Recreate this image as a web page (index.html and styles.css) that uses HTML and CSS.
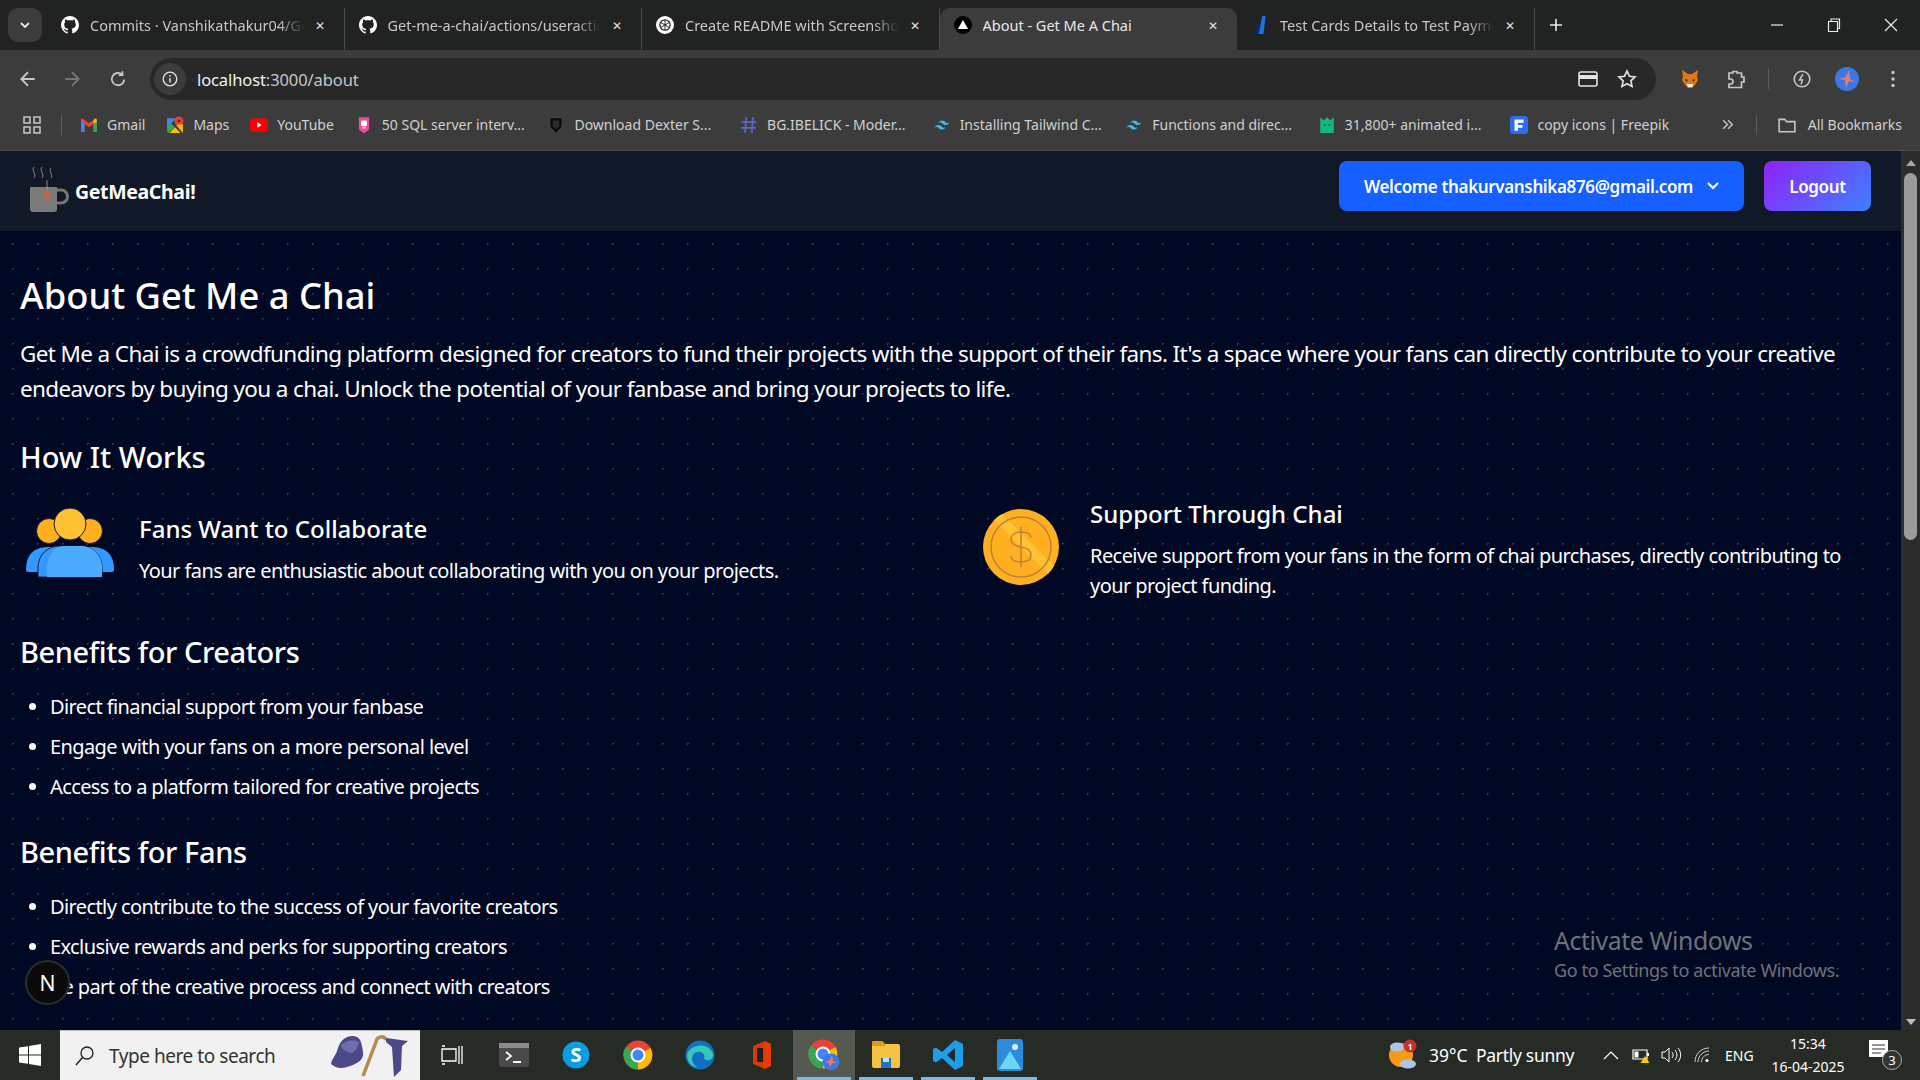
FILE: index.html
```html
<!DOCTYPE html>
<html lang="en">
<head>
    <meta charset="UTF-8">
    <title>About - Get Me A Chai</title>
    <link rel="stylesheet" href="styles.css">
</head>
<body>
    <div class="tabstrip">
        <div class="tab-search"><svg width="10" height="6" viewBox="0 0 10 6"><path d="M1 1l4 4 4-4" fill="none" stroke="#e8eaed" stroke-width="1.8"/></svg></div>
        <div class="tab">
            <svg class="fav" viewBox="0 0 16 16"><path fill="#fff" d="M8 0C3.6 0 0 3.6 0 8c0 3.5 2.3 6.5 5.5 7.6.4.1.5-.2.5-.4v-1.4c-2.2.5-2.7-1.1-2.7-1.1-.4-.9-.9-1.2-.9-1.2-.7-.5.1-.5.1-.5.8.1 1.2.8 1.2.8.7 1.2 1.9.9 2.3.7.1-.5.3-.9.5-1.1-1.8-.2-3.6-.9-3.6-4 0-.9.3-1.6.8-2.1-.1-.2-.4-1 .1-2.1 0 0 .7-.2 2.2.8.6-.2 1.3-.3 2-.3s1.4.1 2 .3c1.5-1 2.2-.8 2.2-.8.4 1.1.2 1.9.1 2.1.5.6.8 1.3.8 2.1 0 3.1-1.9 3.7-3.7 3.9.3.3.6.8.6 1.5v2.2c0 .2.1.5.6.4C13.7 14.5 16 11.5 16 8c0-4.4-3.6-8-8-8z"/></svg>
            <span class="tab-title">Commits · Vanshikathakur04/Ge</span>
            <span class="tab-x">✕</span>
        </div>
        <div class="tab">
            <svg class="fav" viewBox="0 0 16 16"><path fill="#fff" d="M8 0C3.6 0 0 3.6 0 8c0 3.5 2.3 6.5 5.5 7.6.4.1.5-.2.5-.4v-1.4c-2.2.5-2.7-1.1-2.7-1.1-.4-.9-.9-1.2-.9-1.2-.7-.5.1-.5.1-.5.8.1 1.2.8 1.2.8.7 1.2 1.9.9 2.3.7.1-.5.3-.9.5-1.1-1.8-.2-3.6-.9-3.6-4 0-.9.3-1.6.8-2.1-.1-.2-.4-1 .1-2.1 0 0 .7-.2 2.2.8.6-.2 1.3-.3 2-.3s1.4.1 2 .3c1.5-1 2.2-.8 2.2-.8.4 1.1.2 1.9.1 2.1.5.6.8 1.3.8 2.1 0 3.1-1.9 3.7-3.7 3.9.3.3.6.8.6 1.5v2.2c0 .2.1.5.6.4C13.7 14.5 16 11.5 16 8c0-4.4-3.6-8-8-8z"/></svg>
            <span class="tab-title">Get-me-a-chai/actions/useractio</span>
            <span class="tab-x">✕</span>
        </div>
        <div class="tab">
            <svg class="fav" viewBox="0 0 16 16"><circle cx="8" cy="8" r="8" fill="#fff"/><circle cx="8" cy="8" r="4.6" fill="none" stroke="#333" stroke-width="1.2"/><path d="M8 3.4v9.2M4 5.7l8 4.6M12 5.7l-8 4.6" stroke="#333" stroke-width=".9"/></svg>
            <span class="tab-title">Create README with Screensho</span>
            <span class="tab-x">✕</span>
        </div>
        <div class="tab tab-active">
            <svg class="fav" viewBox="0 0 16 16"><circle cx="8" cy="8" r="8" fill="#000"/><path d="M8 3.5l4.5 8h-9z" fill="#fff"/></svg>
            <span class="tab-title">About - Get Me A Chai</span>
            <span class="tab-x">✕</span>
        </div>
        <div class="tab tab-last">
            <svg class="fav" viewBox="0 0 16 16"><path d="M1 16C5 12 8 6 10 1l-2 15z" fill="#0a2a66"/><path d="M10 0h3l-2 16H7z" fill="#1a73e8"/></svg>
            <span class="tab-title">Test Cards Details to Test Payme</span>
            <span class="tab-x">✕</span>
        </div>
        <div class="tab-new"><svg width="14" height="14" viewBox="0 0 14 14"><path d="M7 1v12M1 7h12" stroke="#e8eaed" stroke-width="1.6"/></svg></div>
        <div class="win-buttons">
            <svg width="14" height="14" viewBox="0 0 14 14"><path d="M1 7h12" stroke="#e8eaed" stroke-width="1.2"/></svg>
            <svg width="14" height="14" viewBox="0 0 14 14"><path d="M1.5 3.5h9v10h-9zM4 3.5V1h8.5v9.5h-2" fill="none" stroke="#e8eaed" stroke-width="1.2"/></svg>
            <svg width="14" height="14" viewBox="0 0 14 14"><path d="M1 1l12 12M13 1L1 13" stroke="#e8eaed" stroke-width="1.2"/></svg>
        </div>
    </div>

    <div class="toolbar">
        <svg class="nav-ic" viewBox="0 0 16 16"><path d="M14 8H2.5M8 2L2 8l6 6" fill="none" stroke="#c7c7c7" stroke-width="1.6"/></svg>
        <svg class="nav-ic" viewBox="0 0 16 16"><path d="M2 8h11.5M8 2l6 6-6 6" fill="none" stroke="#747775" stroke-width="1.6"/></svg>
        <svg class="nav-ic" viewBox="0 0 16 16"><path d="M13.5 8.5A5.5 5.5 0 1 1 11.5 3.8M12 1v3.5H8.5" fill="none" stroke="#c7c7c7" stroke-width="1.6"/></svg>
        <div class="omnibox">
            <div class="site-info"><svg width="16" height="16" viewBox="0 0 16 16"><circle cx="8" cy="8" r="6.8" fill="none" stroke="#e3e3e3" stroke-width="1.3"/><path d="M8 7v4.5M8 4.3v1.4" stroke="#e3e3e3" stroke-width="1.4"/></svg></div>
            <span class="url"><span class="url-host">localhost</span>:3000/about</span>
            <span class="spacer"></span>
            <svg class="omni-card" width="20" height="16" viewBox="0 0 20 16"><rect x="1" y="1" width="18" height="14" rx="2" fill="none" stroke="#e3e3e3" stroke-width="1.6"/><rect x="1" y="4" width="18" height="4" fill="#e3e3e3"/></svg>
            <svg width="20" height="20" viewBox="0 0 18 18"><path d="M9 1.8l2.2 4.7 5 .6-3.7 3.5 1 5.1L9 13.2l-4.500 2.500 1-5.100L1.800 7.100l5-.6z" fill="none" stroke="#e3e3e3" stroke-width="1.500"/></svg>
        </div>
        <svg class="ext-ic ext-fox" viewBox="0 0 20 20"><path d="M2 1l6 4h4l6-4-1 7 1 3-3 5-3 3H8l-3-3-3-5 1-3z" fill="#e2761b"/><path d="M7 15h6l-1 3H8z" fill="#f5f5f5"/><path d="M5 10l3 1-2 2zM15 10l-3 1 2 2z" fill="#3a2a1a"/></svg>
        <svg class="ext-ic ext-puzzle" viewBox="0 0 20 20"><path d="M7 4V2.500h4V4h4.500v4H18v5h-2.500v5.500H3V15h1.500a2 2 0 0 0 0-5H3V4z" fill="none" stroke="#c7c7c7" stroke-width="1.700"/></svg>
        <span class="tool-sep"></span>
        <svg class="ext-ic ext-bolt" viewBox="0 0 20 20"><circle cx="10" cy="10" r="7.800" fill="none" stroke="#c7c7c7" stroke-width="1.600"/><path d="M11 5l-3.500 6h3L9 15.500" fill="none" stroke="#c7c7c7" stroke-width="1.500"/></svg>
        <svg class="avatar" viewBox="0 0 24 24"><circle cx="12" cy="12" r="12" fill="#3b78e7"/><path d="M14 3l1 9 6 3-7-1-3 7-1-8-6-1 7-2z" fill="#f2786d"/></svg>
        <svg class="dots" viewBox="0 0 4 18"><circle cx="2" cy="2.500" r="1.700" fill="#c7c7c7"/><circle cx="2" cy="9" r="1.700" fill="#c7c7c7"/><circle cx="2" cy="15.500" r="1.700" fill="#c7c7c7"/></svg>
    </div>

    <div class="bookmarks">
        <svg class="apps" viewBox="0 0 18 18"><path d="M1 1h6v6H1zM11 1h6v6h-6zM1 11h6v6H1zM11 11h6v6h-6z" fill="none" stroke="#c7c7c7" stroke-width="1.500"/></svg>
        <span class="bm-sep"></span>
        <div class="bm"><svg class="bm-ic" viewBox="0 0 16 16"><path d="M1 3v11h3V7l4 3 4-3v7h3V3l-1-1-6 4.500L2 2z" fill="#ea4335"/><path d="M1 3v11h3V7z" fill="#4285f4"/><path d="M12 7v7h3V3z" fill="#34a853"/><path d="M13 2.300L15 3v2l-3 2V4z" fill="#fbbc04"/></svg>Gmail</div>
        <div class="bm"><svg class="bm-ic" viewBox="0 0 16 16"><path d="M1 3l7 7-6 5-1-1z" fill="#34a853"/><path d="M1 2h8l-8 8z" fill="#4285f4"/><path d="M3 15l5-5 5 5z" fill="#fbbc04"/><circle cx="11.500" cy="4.500" r="4" fill="#ea4335"/><circle cx="11.500" cy="4.500" r="1.300" fill="#7a1a14"/><path d="M9 8l6 7V7z" fill="#fbbc04"/></svg>Maps</div>
        <div class="bm"><svg class="bm-ic" viewBox="0 0 16 16"><rect y="2" width="16" height="12" rx="3.500" fill="#f00"/><path d="M6.500 5.500v5l4-2.500z" fill="#fff"/></svg>YouTube</div>
        <div class="bm bm-wide"><svg class="bm-ic" viewBox="0 0 16 16"><path d="M3.500 1h9v11L8 15.500 3.500 12z" fill="#e84f9b"/><rect x="5.500" y="4" width="5" height="5" rx="1" fill="#fff"/><path d="M6.500 10.500h3" stroke="#fff"/></svg>50 SQL server interv...</div>
        <div class="bm bm-wide"><svg class="bm-ic" viewBox="0 0 16 16"><path d="M2.500 1.500h11v8L8 15.500l-5.500-6z" fill="#0b0b0b" stroke="#555" stroke-width=".7"/><path d="M5 4h6v5l-3 3-3-3z" fill="#2a2a2a"/></svg>Download Dexter S...</div>
        <div class="bm bm-wide"><svg class="bm-ic" viewBox="0 0 16 16"><path d="M5.500 1l-1 14M11.500 1l-1 14M1.500 5.500h13M1 10.500h13" stroke="#5b6ac4" stroke-width="1.500"/></svg>BG.IBELICK - Moder...</div>
        <div class="bm bm-wide"><svg class="bm-ic" viewBox="0 0 24 24"><path fill="#38bdf8" d="M12 6c-2.670 0-4.330 1.330-5 4 1-1.330 2.170-1.830 3.500-1.500.76.19 1.310.74 1.910 1.350C13.390 10.850 14.500 12 17 12c2.670 0 4.330-1.330 5-4-1 1.330-2.170 1.830-3.500 1.500-.76-.19-1.300-.74-1.910-1.350C15.610 7.150 14.500 6 12 6zM7 12c-2.670 0-4.330 1.330-5 4 1-1.330 2.170-1.830 3.500-1.500.76.19 1.300.74 1.910 1.350C8.390 16.850 9.500 18 12 18c2.670 0 4.330-1.330 5-4-1 1.330-2.170 1.830-3.500 1.500-.76-.19-1.300-.74-1.910-1.350C10.610 13.150 9.500 12 7 12z"/></svg>Installing Tailwind C...</div>
        <div class="bm bm-wide"><svg class="bm-ic" viewBox="0 0 24 24"><path fill="#38bdf8" d="M12 6c-2.670 0-4.330 1.330-5 4 1-1.330 2.170-1.830 3.500-1.500.76.19 1.310.74 1.910 1.350C13.390 10.850 14.500 12 17 12c2.670 0 4.330-1.330 5-4-1 1.330-2.170 1.830-3.500 1.500-.76-.19-1.300-.74-1.910-1.350C15.610 7.150 14.500 6 12 6zM7 12c-2.670 0-4.330 1.330-5 4 1-1.330 2.170-1.830 3.500-1.500.76.19 1.300.74 1.910 1.350C8.390 16.850 9.500 18 12 18c2.670 0 4.330-1.330 5-4-1 1.330-2.170 1.830-3.500 1.500-.76-.19-1.300-.74-1.910-1.350C10.610 13.150 9.500 12 7 12z"/></svg>Functions and direc...</div>
        <div class="bm bm-wide"><svg class="bm-ic" viewBox="0 0 16 16"><path d="M2 1l3 3 3-3 3 3 3-3v14H2z" fill="#10b981"/><circle cx="6" cy="8" r="1" fill="#064"/><circle cx="10" cy="8" r="1" fill="#064"/></svg>31,800+ animated i...</div>
        <div class="bm"><svg class="bm-ic" viewBox="0 0 16 16"><rect width="16" height="16" rx="3" fill="#2f6df0"/><path d="M4 3h8v3H7v2h4v2.500H7V13H4z" fill="#fff"/></svg>copy icons | Freepik</div>
        <span class="spacer"></span>
        <svg class="bm-more" viewBox="0 0 12 12"><path d="M2 2l4 4-4 4M6.500 2l4 4-4 4" fill="none" stroke="#c7c7c7" stroke-width="1.300"/></svg>
        <span class="bm-sep bm-sep-end"></span>
        <div class="bm bm-all"><svg class="bm-ic" viewBox="0 0 16 16"><path d="M1 3h5l1.500 2H15v9H1z" fill="none" stroke="#c7c7c7" stroke-width="1.400"/></svg>All Bookmarks</div>
    </div>

    <div class="viewport">
        <div class="page">
            <nav class="navbar">
                <div class="brand">
                    <svg class="brand-cup" viewBox="0 0 42 48"><path d="M6 2C3 6 9 9 6 13M14 2c-3 4 3 7 0 11M23 3c-3 4 3 7 0 10" fill="none" stroke="#8b8d90" stroke-width="1"/><path d="M2 22h27v22a3 3 0 0 1-3 3H5a3 3 0 0 1-3-3z" fill="#7a7a7a"/><path d="M29 25h4a6 6 0 0 1 0 13h-4" fill="none" stroke="#777" stroke-width="3"/><path d="M19 15v9" stroke="#aaa" stroke-width=".8"/><path d="M16.500 27l2.500-3 2.500 3v7h-5z" fill="#c8663a"/></svg>
                    <span class="brand-name">GetMeaChai!</span>
                </div>
                <div class="nav-actions">
                    <button class="btn-welcome">Welcome thakurvanshika876@gmail.com<svg width="12" height="8" viewBox="0 0 12 8"><path d="M1 1l5 5 5-5" fill="none" stroke="#fff" stroke-width="2"/></svg></button>
                    <button class="btn-logout">Logout</button>
                </div>
            </nav>
            <main class="content">
                <h1>About Get Me a Chai</h1>
                <p class="intro">Get Me a Chai is a crowdfunding platform designed for creators to fund their projects with the support of their fans. It's a space where your fans can directly contribute to your creative endeavors by buying you a chai. Unlock the potential of your fanbase and bring your projects to life.</p>
                <h2 class="how">How It Works</h2>
                <div class="works">
                    <div class="work">
                        <svg class="work-ic" viewBox="0 0 90 72"><circle cx="24" cy="23" r="12.500" fill="#ffb020" stroke="#1a1a33"/><circle cx="65" cy="23" r="12.500" fill="#ffb020" stroke="#1a1a33"/><path d="M1 62c0-18 10-23 24-23h40c14 0 24 5 24 23 0 1-1 2-2 2H3c-1 0-2-1-2-2z" fill="#3399ff"/><path d="M13 69V60c0-14 10-22 22-22h20c12 0 22 8 22 22v9z" fill="#3399ff" stroke="#15213f" stroke-width="1"/><path d="M22 69V60c0-14 8-22 18-22h15c12 0 22 8 22 22v9z" fill="#4cabff"/><circle cx="45" cy="16" r="16" fill="#ffc233" stroke="#1a1a33" stroke-width="1"/></svg>
                        <div class="work-text">
                            <h3>Fans Want to Collaborate</h3>
                            <p>Your fans are enthusiastic about collaborating with you on your projects.</p>
                        </div>
                    </div>
                    <div class="work">
                        <svg class="work-ic coin" viewBox="0 0 76 76"><circle cx="38" cy="38" r="38" fill="#ffb020"/><path d="M11 11l54 54a38 38 0 0 0 6-8L19 5a38 38 0 0 0-8 6z" fill="#ffc233"/><circle cx="38" cy="38" r="30" fill="none" stroke="#c07f3a" stroke-width="1.500"/><path d="M38 18v40M48 29c0-4-4-6-10-6s-10 3-10 7 4 7 10 8 10 3 10 8-4 7-10 7-10-2-10-6" fill="none" stroke="#c07f3a" stroke-width="1.500"/></svg>
                        <div class="work-text">
                            <h3>Support Through Chai</h3>
                            <p>Receive support from your fans in the form of chai purchases, directly contributing to your project funding.</p>
                        </div>
                    </div>
                </div>
                <h2 class="benefits">Benefits for Creators</h2>
                <ul>
                    <li>Direct financial support from your fanbase</li>
                    <li>Engage with your fans on a more personal level</li>
                    <li>Access to a platform tailored for creative projects</li>
                </ul>
                <h2 class="benefits">Benefits for Fans</h2>
                <ul>
                    <li>Directly contribute to the success of your favorite creators</li>
                    <li>Exclusive rewards and perks for supporting creators</li>
                    <li>Be part of the creative process and connect with creators</li>
                </ul>
            </main>
            <div class="next-badge">N</div>
            <div class="activate">
                <div class="activate-title">Activate Windows</div>
                <div class="activate-sub">Go to Settings to activate Windows.</div>
            </div>
        </div>
        <div class="scrollbar">
            <svg width="12" height="8" viewBox="0 0 12 8"><path d="M6 1l5 6H1z" fill="#a8a8a8"/></svg>
            <div class="thumb"></div>
            <span class="spacer"></span>
            <svg width="12" height="8" viewBox="0 0 12 8"><path d="M6 7l5-6H1z" fill="#bdbdbd"/></svg>
        </div>
    </div>

    <footer class="taskbar">
        <div class="start"><svg width="22" height="22" viewBox="0 0 22 22"><path d="M0 3.500l9-1.300v8.300H0zM10 2l12-2v10.500H10zM0 11.500h9v8.300l-9-1.300zM10 11.500h12V22l-12-2z" fill="#fff"/></svg></div>
        <div class="search">
            <svg width="20" height="22" viewBox="0 0 20 22"><circle cx="12" cy="8" r="6" fill="none" stroke="#222" stroke-width="1.300"/><path d="M7.500 12.500L1 20" stroke="#222" stroke-width="1.500"/></svg>
            <span>Type here to search</span>
            <svg class="search-art" viewBox="0 0 86 44"><path d="M1 30C2 24 6 22 8 14 11 4 20 0 27 3c4 2 5 8 6 15 1 6-3 10-10 13-7 3-16 5-22-1z" fill="#4c4a86"/><path d="M11 11c6-5 13-6 18-3-1 5-3 9-7 11-6-1-10-3-11-8z" fill="#6f6cb0"/><path d="M33 42L46 8c1-6 8-7 10-2" fill="none" stroke="#b98a4e" stroke-width="3.500"/><path d="M56 4l22 3-6 5-1 24-7 7-2-30-6-5z" fill="#4c4a86"/></svg>
        </div>
        <div class="task-apps">
            <div class="task-app"><svg width="22" height="20" viewBox="0 0 22 20"><path d="M1 1h3M1 19h3M1 4h14v12H1zM18 1v18M21 1v18" fill="none" stroke="#fff" stroke-width="1.300"/></svg></div>
            <div class="task-app"><svg width="30" height="24" viewBox="0 0 30 24"><rect width="30" height="24" rx="3" fill="#4a4a4a"/><rect width="30" height="5" fill="#8a8a8a"/><path d="M7 9l5 4-5 4M14 19h8" fill="none" stroke="#fff" stroke-width="1.800"/></svg></div>
            <div class="task-app"><svg width="28" height="28" viewBox="0 0 28 28"><circle cx="14" cy="14" r="13.500" fill="#0a9ee0"/><text x="14" y="21" text-anchor="middle" class="skype-s">S</text></svg></div>
            <div class="task-app"><svg width="30" height="30" viewBox="0 0 30 30"><circle cx="15" cy="15" r="14.500" fill="#ea4335"/><path d="M15 15L2.500 22A14.500 14.500 0 0 0 15 29.500z" fill="#34a853"/><path d="M15 15L2.500 22A14.500 14.500 0 0 1 3 6.500z" fill="#34a853"/><path d="M15 15l12.500-7A14.500 14.500 0 0 1 15 29.500z" fill="#fbbc04"/><circle cx="15" cy="15" r="6.500" fill="#4285f4" stroke="#fff" stroke-width="2"/></svg></div>
            <div class="task-app"><svg width="30" height="30" viewBox="0 0 30 30"><circle cx="15" cy="15" r="14.500" fill="#0f6fc4"/><path d="M2 15C4 4 24 1 28 14c1 6-6 8-9 5 2-5-3-9-9-6-4 3-4 11 3 14C7 28 2 22 2 15z" fill="#35c8b8"/><path d="M10 13c5-3 10 0 9 6 3 3 9 1 9-3-2 8-10 13-15 11-7-3-7-11-3-14z" fill="#0f6fc4"/></svg></div>
            <div class="task-app"><svg width="24" height="30" viewBox="0 0 24 30"><path d="M3 6l12-5v28L3 24z" fill="#d83b01"/><path d="M15 1l6 3v22l-6 3z" fill="#eb3c00"/><rect x="7" y="8" width="6" height="14" fill="#1f1f1f"/></svg></div>
            <div class="task-app task-app-active"><svg width="32" height="32" viewBox="0 0 32 32"><circle cx="15" cy="15" r="14.500" fill="#ea4335"/><path d="M15 15L2.500 22A14.500 14.500 0 0 0 15 29.500z" fill="#34a853"/><path d="M15 15L2.500 22A14.500 14.500 0 0 1 3 6.500z" fill="#34a853"/><path d="M15 15l12.500-7A14.500 14.500 0 0 1 15 29.500z" fill="#fbbc04"/><circle cx="15" cy="15" r="6.500" fill="#4285f4" stroke="#fff" stroke-width="2"/><circle cx="23" cy="23" r="8.500" fill="#3b78e7"/><path d="M24 16l1 6 4 2-5 0-2 5-1-5-4-1 5-2z" fill="#f2786d"/></svg></div>
            <div class="task-app task-app-open"><svg width="28" height="30" viewBox="0 0 28 30"><path d="M0 3a2 2 0 0 1 2-2h8l3 3h13a2 2 0 0 1 2 2v20a2 2 0 0 1-2 2H2a2 2 0 0 1-2-2z" fill="#f5c242"/><path d="M0 3a2 2 0 0 1 2-2h8l3 3v2H0z" fill="#e09b18"/><rect x="9" y="18" width="10" height="10" fill="#1a73c7"/><rect x="11" y="18" width="6" height="4" fill="#bfe1f7"/></svg></div>
            <div class="task-app task-app-open"><svg width="30" height="30" viewBox="0 0 30 30"><path d="M22 0l8 4v22l-8 4-13-12-6 4.500L0 21V9l3-1.500L9 12z" fill="#1e9de8"/><path d="M22 8l-8 7 8 7z" fill="#1f2a28"/></svg></div>
            <div class="task-app task-app-open"><svg width="26" height="32" viewBox="0 0 26 32"><rect width="26" height="32" rx="3" fill="#2d8bdc"/><circle cx="18" cy="8" r="3" fill="#d8f0fb"/><path d="M2 30L13 12l11 18z" fill="#6fd5f5"/></svg></div>
        </div>
        <span class="spacer"></span>
        <div class="tray">
            <div class="weather">
                <svg class="weather-ic" viewBox="0 0 32 32"><circle cx="14" cy="16" r="12" fill="#f59a1b"/><ellipse cx="10" cy="8" rx="7" ry="4.500" fill="#a9c6ea"/><ellipse cx="21" cy="25" rx="8" ry="4.500" fill="#a9c6ea"/><circle cx="23" cy="7" r="6.500" fill="#c9302c"/><text x="23" y="10.500" text-anchor="middle" class="weather-num">1</text></svg>
                <span class="weather-temp">39°C</span>
                <span class="weather-text">Partly sunny</span>
            </div>
            <svg class="tray-chevron" width="16" height="10" viewBox="0 0 16 10"><path d="M1 9l7-7 7 7" fill="none" stroke="#fff" stroke-width="1.200"/></svg>
            <svg class="tray-battery" width="18" height="16" viewBox="0 0 18 16"><path d="M1 3h14v9H1z" fill="none" stroke="#fff" stroke-width="1.200"/><rect x="2.500" y="4.500" width="4" height="6" fill="#fff"/><rect x="15" y="6" width="2" height="3" fill="#fff"/><path d="M13 9l4.500 7h-9z" fill="#fc0"/></svg>
            <svg class="tray-sound" width="20" height="16" viewBox="0 0 20 16"><path d="M1 5h3l4-4v14l-4-4H1zM11 5c1.500 2 1.500 4 0 6M14 3c2.500 3 2.500 7 0 10M17 1c3.500 4 3.500 10 0 14" fill="none" stroke="#fff" stroke-width="1"/></svg>
            <svg class="tray-wifi" width="16" height="16" viewBox="0 0 16 16"><path d="M1 15c0-8 6-14 14-14M4 15c0-6 5-11 11-11M7.500 15c0-4 3-7.500 7.500-7.500" fill="none" stroke="#ccc" stroke-width="1"/><circle cx="13" cy="13.500" r="1.500" fill="#fff"/></svg>
            <span class="lang">ENG</span>
            <div class="clock"><div>15:34</div><div>16-04-2025</div></div>
            <div class="notif">
                <svg width="20" height="18" viewBox="0 0 20 18"><path d="M0 0h19v17H0z" fill="#fff"/><path d="M3 5h13M3 9h13M3 13h9" stroke="#333" stroke-width="1.200"/></svg>
                <span class="notif-count">3</span>
            </div>
        </div>
    </footer>
</body>
</html>
```

FILE: styles.css
```css
* { box-sizing: border-box; }
html, body {
    margin: 0;
    height: 1080px;
    overflow: hidden;
}
body {
    font-family: "Noto Sans", "Open Sans", sans-serif;
    background-color: #3c3c3c;
    color: #e3e3e3;
    display: flex;
    flex-direction: column;
}
.spacer { flex: 1; }
svg { flex-shrink: 0; display: block; }

/* tab strip */
.tabstrip {
    height: 50px;
    background-color: #202322;
    display: flex;
    align-items: flex-end;
    padding-left: 8px;
}
.tab-search {
    flex: 0 0 34px;
    height: 34px;
    margin: 0 5px 8px 0;
    background-color: #3c3c3c;
    border-radius: 10px;
    display: flex;
    align-items: center;
    justify-content: center;
}
.tab {
    flex: 0 0 297.5px;
    min-width: 0;
    height: 42px;
    padding: 0 17px 8px 14px;
    display: flex;
    align-items: center;
    gap: 11px;
    border-right: 1px solid #4a4b4d;
    font-size: 14.5px;
    color: #c7c7c7;
    white-space: nowrap;
}
.tab-active {
    background-color: #3c3c3c;
    color: #e8e8e8;
    border-right: 0;
    border-radius: 10px 10px 0 0;
}
.fav { width: 18px; height: 18px; }
.tab-title {
    flex: 1;
    min-width: 0;
    overflow: hidden;
    -webkit-mask-image: linear-gradient(90deg, #000 88%, transparent);
    mask-image: linear-gradient(90deg, #000 88%, transparent);
}
.tab-active .tab-title { mask-image: none; -webkit-mask-image: none; }
.tab-x { font-size: 12px; color: #e3e3e3; width: 12px; }
.tab-new { width: 34px; height: 42px; padding: 10px 0 0 14px; }
.win-buttons {
    margin-left: auto;
    height: 50px;
    flex: 0 0 150px;
    padding-right: 22px;
    display: flex;
    align-items: center;
    justify-content: space-between;
}

/* toolbar */
.toolbar {
    height: 50px;
    display: flex;
    align-items: center;
    padding: 8px 0 0 19px;
}
.nav-ic { width: 18px; height: 18px; margin-right: 26px; }
.nav-ic:nth-child(2) { margin-right: 28px; }
.nav-ic:nth-child(3) { margin-right: 23px; }
.omnibox {
    flex: 0 0 1506px;
    height: 42px;
    border-radius: 21px;
    background-color: #282828;
    display: flex;
    align-items: center;
    gap: 21px;
    padding-right: 19px;
    font-size: 16.5px;
    margin-right: 24px;
}
.omni-card { margin-right: -2px; }
.site-info {
    width: 32px;
    height: 32px;
    margin-left: 4px;
    margin-right: -10px;
    border-radius: 50%;
    background-color: #3c3c3c;
    display: flex;
    align-items: center;
    justify-content: center;
}
.url { color: #c7c7c7; letter-spacing: -0.1px; }
.url-host { color: #f1f1f1; }
.ext-ic { width: 20px; height: 20px; }
.ext-fox { margin-right: 26px; }
.ext-puzzle { margin-right: 22px; }
.tool-sep { width: 1px; height: 20px; background-color: #5c5c5c; margin-right: 23px; }
.ext-bolt { margin-right: 23px; }
.avatar { width: 24px; height: 24px; margin-right: 32px; }
.dots { width: 4px; height: 18px; }

/* bookmarks */
.bookmarks {
    height: 51px;
    padding: 0 18px 1px 23px;
    display: flex;
    align-items: center;
    font-size: 14px;
    color: #d0d0d0;
    border-bottom: 1px solid #4a4a4a;
    white-space: nowrap;
}
.apps { width: 18px; height: 18px; }
.bm-sep { width: 1px; height: 20px; background-color: #5c5c5c; margin: 0 18px 0 20px; }
.bm-sep-end { margin: 0 21px 0 0; }
.bm { display: flex; align-items: center; gap: 9px; margin-right: 21px; }
.bm-wide { flex: 0 0 171.6px; }
.bm-ic { width: 18px; height: 18px; }
.bm-all { margin: 0; gap: 12px; }
.bm-more { width: 13px; height: 13px; margin-right: 22px; }

/* page area */
.viewport {
    flex: 0 0 879px;
    display: flex;
}
.page {
    flex: 1;
    position: relative;
    overflow: hidden;
    color: #fff;
    background-color: #000824;
    background-image: radial-gradient(rgba(255, 255, 255, 0.2) 1px, transparent 1px);
    background-size: 25px 25px;
    background-position: 0 5px;
}
.navbar {
    height: 80px;
    background-color: #111827;
    display: flex;
    align-items: center;
    justify-content: space-between;
    padding: 0 30px 0 28px;
}
.brand { display: flex; align-items: center; gap: 5px; }
.brand-cup { width: 42px; height: 48px; margin-top: -4px; }
.brand-name { font-size: 19.5px; font-weight: 700; letter-spacing: -0.35px; }
.nav-actions { display: flex; gap: 20px; margin-top: -10px; }
.nav-actions button {
    height: 50px;
    border: 0;
    border-radius: 8px;
    color: #fff;
    font-family: inherit;
    font-size: 17px;
    font-weight: 600;
    letter-spacing: -0.35px;
}
.btn-welcome {
    width: 405px;
    background-color: #1660ff;
    display: flex;
    align-items: center;
    justify-content: center;
    gap: 14px;
}
.btn-logout {
    width: 107px;
    background-image: linear-gradient(135deg, #9022f8, #3d80ff);
}
.content { padding: 44px 20px 0; }
h1 {
    margin: 0;
    font-size: 36.3px;
    line-height: 40px;
    font-weight: 500;
}
.intro {
    margin: 21px 0 0;
    font-size: 22.5px;
    line-height: 35px;
    letter-spacing: -0.63px;
}
h2 {
    margin: 0;
    font-size: 29px;
    line-height: 36px;
    font-weight: 500;
    letter-spacing: -0.4px;
}
.how { margin-top: 33px; letter-spacing: 0; }
.works {
    display: grid;
    grid-template-columns: 958px 1fr;
    margin-top: 21px;
    height: 106px;
}
.work { display: flex; align-items: center; gap: 24px; padding-left: 5px; }
.work-ic { width: 90px; height: 72px; margin-top: -10px; }
.coin { width: 76px; height: 76px; margin: -4px 7px 0 0; }
h3 {
    margin: 0 0 11px;
    font-size: 24px;
    line-height: 32px;
    font-weight: 500;
}
.work-text p {
    margin: 0;
    font-size: 20px;
    line-height: 30px;
    letter-spacing: -0.56px;
}
.benefits { margin-top: 32px; }
ul + .benefits { margin-top: 27px; }
ul {
    margin: 17px 0 0;
    padding: 0 0 0 30px;
    font-size: 20px;
    line-height: 40px;
    letter-spacing: -0.6px;
}
.next-badge {
    position: absolute;
    left: 25px;
    top: 809px;
    width: 45px;
    height: 45px;
    border-radius: 50%;
    background-color: #0a0a0a;
    border: 2px solid #2c2c2c;
    display: flex;
    align-items: center;
    justify-content: center;
    font-size: 21px;
}
.activate {
    position: absolute;
    left: 1554px;
    top: 771px;
    color: #6f7278;
    white-space: nowrap;
}
.activate-title { font-size: 24.8px; line-height: 36px; letter-spacing: -0.4px; }
.activate-sub { font-size: 18px; line-height: 24px; letter-spacing: -0.37px; }
.scrollbar {
    flex: 0 0 19px;
    background-color: #2c2c2c;
    display: flex;
    flex-direction: column;
    align-items: center;
    padding: 8px 0 4px;
}
.thumb {
    width: 13px;
    height: 367px;
    margin-top: 6px;
    border-radius: 7px;
    background-color: #9b9b9b;
}

/* taskbar */
.taskbar {
    flex: 0 0 50px;
    background-color: #272b25;
    display: flex;
    align-items: stretch;
    color: #fff;
}
.start { width: 60px; display: flex; align-items: center; justify-content: center; }
.search {
    width: 360px;
    background-color: #f1f1f1;
    border-top: 1px solid #bbb;
    display: flex;
    align-items: center;
    color: #333;
    font-size: 19px;
    letter-spacing: -0.45px;
    padding-left: 15px;
    gap: 14px;
    position: relative;
}
.search-art { position: absolute; right: 4px; top: 3px; width: 86px; height: 44px; }
.task-apps { display: flex; margin-left: 1px; }
.task-app {
    width: 62px;
    display: flex;
    align-items: center;
    justify-content: center;
}
.task-app-active, .task-app-open {
    background: linear-gradient(#76b9ed, #76b9ed) center bottom / 54px 3px no-repeat;
}
.task-app-active { background-color: #545a50; }
.skype-s { font: 700 20px "Noto Sans", sans-serif; fill: #fff; }
.tray { display: flex; align-items: center; padding-right: 23px; }
.weather { display: flex; align-items: center; gap: 9px; font-size: 17.5px; }
.weather-ic { width: 32px; height: 32px; margin-right: 1px; }
.weather-temp { width: 38px; white-space: nowrap; }
.weather-text { width: 95px; white-space: nowrap; letter-spacing: -0.3px; }
.weather-num { font: 700 9px "Noto Sans", sans-serif; fill: #fff; }
.tray-chevron { margin-left: 32px; }
.tray-battery { margin-left: 13px; }
.tray-sound { margin-left: 11px; }
.tray-wifi { margin-left: 13px; }
.lang { font-size: 14px; margin-left: 15px; width: 28px; }
.clock { font-size: 14px; line-height: 23px; text-align: center; margin-left: 18px; width: 74px; white-space: nowrap; }
.notif { position: relative; margin-left: 24px; width: 28px; height: 30px; }
.notif-count {
    position: absolute;
    right: -5px;
    bottom: 0;
    width: 20px;
    height: 20px;
    border-radius: 50%;
    border: 1px solid #aaa;
    background-color: #333;
    font-size: 13px;
    line-height: 18px;
    text-align: center;
}
```
